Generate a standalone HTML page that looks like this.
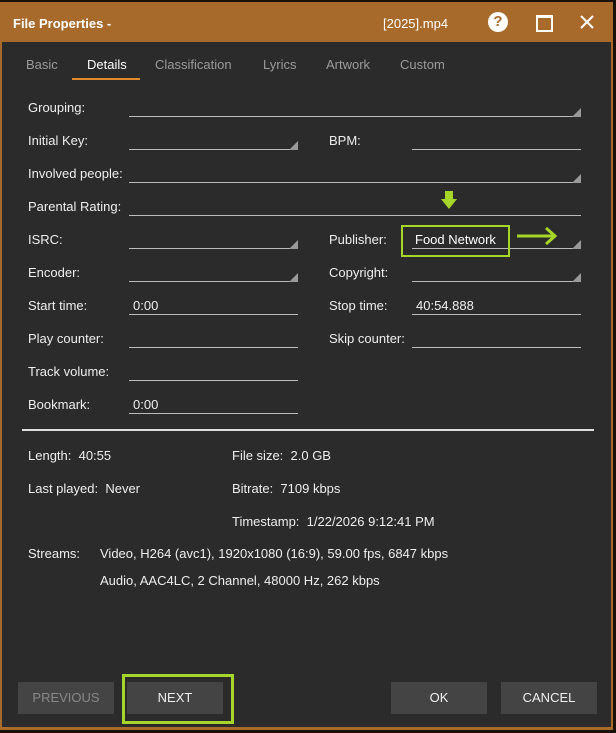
<!DOCTYPE html><html><head><style>
body{margin:0;width:616px;height:733px;background:#1a1208;position:relative;overflow:hidden;font-family:"Liberation Sans",Arial,sans-serif;font-size:13px;color:#eee}
.win{position:absolute;left:0;top:2px;width:613px;height:728px;background:#a86a2a;}
.body{position:absolute;left:2px;top:42px;width:609px;height:685px;background:#2b2b2b}
.a{position:absolute;white-space:nowrap}
.u{position:absolute;height:1px;background:#bbb}
.tri{position:absolute;width:0;height:0;border-left:9px solid transparent;border-bottom:9px solid #999}
.tab{position:absolute;top:57px;color:#9a9a9a;font-size:13px}
.btn{position:absolute;top:682px;height:32px;width:96px;background:#444;color:#eee;text-align:center;line-height:32px;font-size:13px}
</style></head><body>
<div class="win"></div>
<div class="a" style="left:13px;top:16px;font-size:13px;color:#fff;font-weight:bold">File Properties -</div>
<div class="a" style="left:383px;top:16px;font-size:13px;color:#fff">[2025].mp4</div>
<div class="a" style="left:488px;top:12px;width:20px;height:20px;border-radius:50%;background:#fff;color:#a86a2a;font-weight:bold;font-size:15px;text-align:center;line-height:20px">?</div>
<div class="a" style="left:536px;top:15px;width:13px;height:12px;border:2px solid #fff;border-top-width:3px"></div>
<svg class="a" style="left:579px;top:14px" width="16" height="16"><path d="M2 2L14 14M14 2L2 14" stroke="#fff" stroke-width="2"/></svg>
<div class="body"></div>
<div class="tab" style="left:26px">Basic</div>
<div class="tab" style="left:87px;color:#fff">Details</div>
<div class="a" style="left:72px;top:78px;width:68px;height:2px;background:#e08a2a"></div>
<div class="tab" style="left:155px">Classification</div>
<div class="tab" style="left:263px">Lyrics</div>
<div class="tab" style="left:326px">Artwork</div>
<div class="tab" style="left:400px">Custom</div>

<div class="a" style="left:28px;top:100px">Grouping:</div><div class="u" style="left:129px;top:116px;width:452px"></div><div class="tri" style="left:572px;top:108px"></div>
<div class="a" style="left:28px;top:133px">Initial Key:</div><div class="u" style="left:129px;top:149px;width:169px"></div><div class="tri" style="left:289px;top:141px"></div>
<div class="a" style="left:329px;top:133px">BPM:</div><div class="u" style="left:412px;top:149px;width:169px"></div>
<div class="a" style="left:28px;top:166px">Involved people:</div><div class="u" style="left:129px;top:182px;width:452px"></div><div class="tri" style="left:572px;top:174px"></div>
<div class="a" style="left:28px;top:199px">Parental Rating:</div><div class="u" style="left:129px;top:215px;width:452px"></div>
<div class="a" style="left:28px;top:232px">ISRC:</div><div class="u" style="left:129px;top:248px;width:169px"></div><div class="tri" style="left:289px;top:240px"></div>
<div class="a" style="left:329px;top:232px">Publisher:</div><div class="u" style="left:412px;top:248px;width:169px"></div><div class="tri" style="left:572px;top:240px"></div>
<div class="a" style="left:415px;top:232px;color:#fff">Food Network</div>
<div class="a" style="left:401px;top:225px;width:105px;height:28px;border:2px solid #a6d62a"></div>
<svg class="a" style="left:515px;top:226px" width="45" height="20"><path d="M2 10H40M31 2L40 10L31 18" stroke="#a6d62a" stroke-width="3" fill="none"/></svg>
<svg class="a" style="left:441px;top:190px" width="16" height="20"><path d="M4 1H12V9H16L8 19L0 9H4Z" fill="#a6d62a"/></svg>
<div class="a" style="left:28px;top:265px">Encoder:</div><div class="u" style="left:129px;top:281px;width:169px"></div><div class="tri" style="left:289px;top:273px"></div>
<div class="a" style="left:329px;top:265px">Copyright:</div><div class="u" style="left:412px;top:281px;width:169px"></div><div class="tri" style="left:572px;top:273px"></div>
<div class="a" style="left:28px;top:298px">Start time:</div><div class="u" style="left:129px;top:314px;width:169px"></div><div class="a" style="left:133px;top:298px">0:00</div>
<div class="a" style="left:329px;top:298px">Stop time:</div><div class="u" style="left:412px;top:314px;width:169px"></div><div class="a" style="left:416px;top:298px">40:54.888</div>
<div class="a" style="left:28px;top:331px">Play counter:</div><div class="u" style="left:129px;top:347px;width:169px"></div>
<div class="a" style="left:329px;top:331px">Skip counter:</div><div class="u" style="left:412px;top:347px;width:169px"></div>
<div class="a" style="left:28px;top:364px">Track volume:</div><div class="u" style="left:129px;top:380px;width:169px"></div>
<div class="a" style="left:28px;top:397px">Bookmark:</div><div class="u" style="left:129px;top:413px;width:169px"></div><div class="a" style="left:133px;top:397px">0:00</div>
<div class="a" style="left:22px;top:429px;width:572px;height:2px;background:#ddd"></div>
<div class="a" style="left:28px;top:448px">Length:&nbsp; 40:55</div>
<div class="a" style="left:232px;top:448px">File size:&nbsp; 2.0 GB</div>
<div class="a" style="left:28px;top:481px">Last played:&nbsp; Never</div>
<div class="a" style="left:232px;top:481px">Bitrate:&nbsp; 7109 kbps</div>
<div class="a" style="left:232px;top:514px">Timestamp:&nbsp; 1/22/2026 9:12:41 PM</div>
<div class="a" style="left:28px;top:546px">Streams:</div>
<div class="a" style="left:100px;top:546px">Video, H264 (avc1), 1920x1080 (16:9), 59.00 fps, 6847 kbps</div>
<div class="a" style="left:100px;top:573px">Audio, AAC4LC, 2 Channel, 48000 Hz, 262 kbps</div>
<div class="btn" style="left:18px;color:#888">PREVIOUS</div>
<div class="btn" style="left:127px">NEXT</div>
<div class="a" style="left:122px;top:674px;width:106px;height:44px;border:3px solid #a6d62a"></div>
<div class="btn" style="left:391px">OK</div>
<div class="btn" style="left:501px">CANCEL</div>
</body></html>
